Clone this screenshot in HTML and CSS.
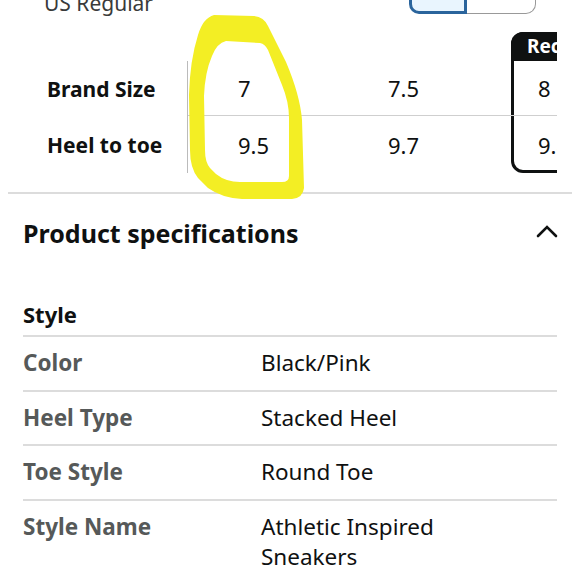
FILE: index.html
```html
<!DOCTYPE html>
<html lang="en">
<head>
<meta charset="utf-8">
<title>Size chart and product specifications</title>
<link rel="stylesheet" href="styles.css">
</head>
<body>
<div class="page">
  <section class="size-chart">
    <div class="fit-row">
      <span class="fit-label">US Regular</span>
      <div class="toggle">
        <span class="toggle-opt toggle-opt--on"></span>
        <span class="toggle-opt"></span>
      </div>
    </div>
    <div class="chart-window">
      <div class="chart-grid">
        <div class="rec-box"></div>
        <div class="rec-head">Recommended</div>

        <div class="row-label r1">Brand Size</div>
        <div class="cell r1 c2 divided">7</div>
        <div class="cell r1 c3 divided">7.5</div>
        <div class="cell r1 c4 divided">8</div>

        <div class="row-label r2">Heel to toe</div>
        <div class="cell r2 c2">9.5</div>
        <div class="cell r2 c3">9.7</div>
        <div class="cell r2 c4">9.8</div>
      </div>
    </div>
  </section>

  <section class="specs">
    <div class="specs-header">
      <h2 class="specs-title">Product specifications</h2>
      <svg class="chevron" width="22" height="14" viewBox="0 0 22 14" aria-hidden="true">
        <polyline points="2,12 11,3 20,12" fill="none" stroke="#0f1111" stroke-width="2.6" stroke-linecap="round" stroke-linejoin="miter"/>
      </svg>
    </div>
    <h3 class="spec-group">Style</h3>
    <dl class="spec-list">
      <div class="spec-row"><dt>Color</dt><dd>Black/Pink</dd></div>
      <div class="spec-row"><dt>Heel Type</dt><dd>Stacked Heel</dd></div>
      <div class="spec-row"><dt>Toe Style</dt><dd>Round Toe</dd></div>
      <div class="spec-row spec-row--last"><dt>Style Name</dt><dd>Athletic Inspired<br>Sneakers</dd></div>
    </dl>
  </section>

  <svg class="marker" width="580" height="580" viewBox="0 0 580 580" aria-hidden="true">
    <path fill="#f3ee24" fill-rule="evenodd" d="
      M214,15 L254,16 Q264,17 268,26 L286,62 Q300,95 302,120 L304,188 Q303,198 292,199 L242,199 Q222,198 208,188 L198,178 Q190,168 190,150 L189,95 Q190,60 198,35 Q203,18 214,15 Z
      M226,41 L260,43 Q265,44 268,50 L282,85 Q289,102 289,118 L289,176 Q289,182 282,182 L240,182 Q226,182 216,174 L210,168 Q205,162 205,150 L204,96 Q205,72 212,56 Q217,43 226,41 Z"/>
  </svg>
</div>
</body>
</html>
```

FILE: styles.css
```css
* { box-sizing: border-box; }

html, body {
  margin: 0;
  padding: 0;
  background: #ffffff;
}

body {
  font-family: "Noto Sans", "Liberation Sans", Arial, sans-serif;
  color: #0f1111;
  width: 580px;
  height: 580px;
  overflow: hidden;
}

.page {
  position: relative;
  width: 580px;
  height: 580px;
  overflow: hidden;
}

/* ---------- size chart ---------- */
.size-chart {
  padding: 0 8px;
}

.fit-row {
  display: flex;
  justify-content: space-between;
  align-items: flex-end;
  margin-top: -22px;
  padding: 0 36px;
  height: 36px;
}

.fit-label {
  font-size: 21px;
  line-height: 28px;
  color: #3a3a3a;
  margin-bottom: -3px;
}

.toggle {
  display: flex;
  width: 127px;
  height: 36px;
}

.toggle-opt {
  flex: 1;
  border: 1px solid #999;
  border-left: none;
  border-radius: 0 0 10px 0;
  background: #fff;
}

.toggle-opt--on {
  flex: 0 0 58px;
  border: 3px solid #2a649c;
  border-radius: 0 0 0 10px;
  background: #e9f5fe;
}

.chart-window {
  margin: 18px 0 0 39px;
  width: 510px;
  overflow: hidden;
}

.chart-grid {
  display: grid;
  grid-template-columns: 141px 150px 150px 150px;
  grid-template-rows: 29px 55px 57px;
  width: 591px;
}

.rec-box {
  grid-column: 4;
  grid-row: 1 / span 3;
  margin-left: 23px;
  border: 3px solid #0f1111;
  border-radius: 12px;
}

.rec-head {
  grid-column: 4;
  grid-row: 1;
  margin-left: 23px;
  background: #0f1111;
  color: #fff;
  font-weight: 700;
  font-size: 19px;
  line-height: 29px;
  padding-left: 16px;
  border-radius: 12px 12px 0 0;
  white-space: nowrap;
}

.row-label {
  grid-column: 1;
  font-weight: 700;
  font-size: 21px;
  display: flex;
  align-items: center;
  border-right: 1px solid #bbb;
  white-space: nowrap;
}

.r1 { grid-row: 2; }
.r2 { grid-row: 3; }
.c2 { grid-column: 2; }
.c3 { grid-column: 3; }
.c4 { grid-column: 4; }

.cell {
  font-size: 22px;
  display: flex;
  align-items: center;
  padding-left: 50px;
}

.divided {
  border-bottom: 1px solid #cfcfcf;
}

/* ---------- specifications ---------- */
.specs {
  margin: 19px 8px 0;
  border-top: 2px solid #dcdcdc;
}

.specs-header {
  display: flex;
  justify-content: space-between;
  align-items: center;
  padding: 22px 14px 0 15px;
  height: 56px;
}

.specs-title {
  margin: 0;
  font-size: 25px;
  font-weight: 700;
  line-height: 32px;
}

.chevron {
  display: block;
  margin-top: -4px;
}

.spec-group {
  margin: 49px 15px 0;
  font-size: 22px;
  font-weight: 700;
  line-height: 30px;
  padding-bottom: 6px;
  border-bottom: 2px solid #dcdcdc;
}

.spec-list {
  margin: 0 15px;
}

.spec-row {
  display: grid;
  grid-template-columns: 238px 1fr;
  padding: 11px 0;
  line-height: 30.5px;
  font-size: 22.5px;
  border-bottom: 2px solid #dcdcdc;
}

.spec-row--last {
  border-bottom: none;
}

.spec-row dt {
  font-weight: 700;
  color: #565959;
}

.spec-row dd {
  margin: 0;
  color: #0f1111;
}

/* hand-drawn highlight over the chart */
.marker {
  position: absolute;
  left: 0;
  top: 0;
  pointer-events: none;
}
```
